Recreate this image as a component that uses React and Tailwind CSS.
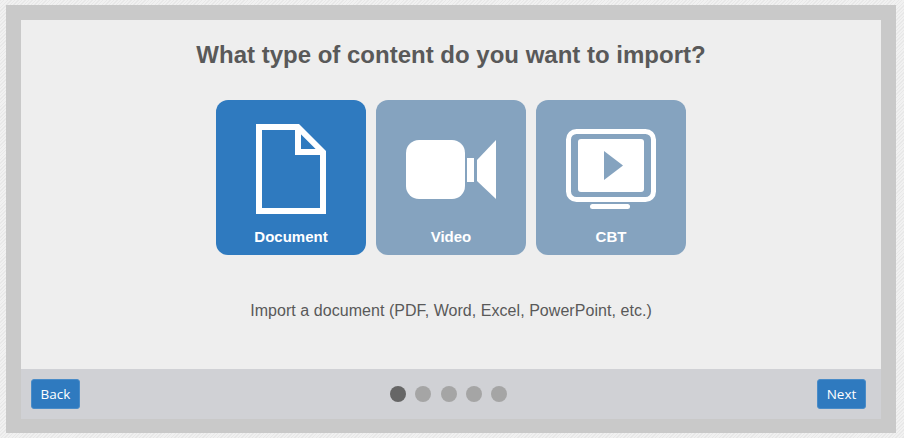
const DOTS = [true, false, false, false, false];

function DocumentIcon() {
  return (
    <svg width="70" height="90" viewBox="0 0 70 90" fill="none" stroke="#fff" strokeWidth="6">
      <path d="M3 3H41.760L67 28.240V87H3Z" />
      <path d="M42 3V28H67" />
    </svg>
  );
}

function VideoIcon() {
  return (
    <svg width="90" height="59" viewBox="0 0 90 59" fill="#fff">
      <rect x="0" y="0" width="59" height="59" rx="13" />
      <rect x="61" y="18" width="7" height="24" />
      <path d="M71 20L90 0V59L71 41Z" />
    </svg>
  );
}

function CbtIcon() {
  return (
    <svg width="90" height="81" viewBox="0 0 90 81" fill="none">
      <rect x="2.500" y="2.500" width="85" height="68" rx="8" stroke="#fff" strokeWidth="5" />
      <rect x="12" y="10" width="66" height="53" rx="3" fill="#fff" />
      <path d="M38 22L57 36.500L38 51Z" fill="#85A3BF" />
      <rect x="24" y="75" width="40" height="5" rx="2.500" fill="#fff" />
    </svg>
  );
}

const TYPES = [
  { label: 'Document', Icon: DocumentIcon, iconClass: 'h-[114px] pt-6', active: true },
  { label: 'Video', Icon: VideoIcon, iconClass: 'h-[114px] pt-10' },
  { label: 'CBT', Icon: CbtIcon, iconClass: 'h-[114px] pt-[29px]' },
];

function TypeCard({ label, Icon, iconClass, active }) {
  return (
    <div
      className={`w-[150px] h-[155px] rounded-xl flex flex-col items-center text-white ${active ? 'bg-[#2F7ABF]' : 'bg-[#85A3BF]'}`}
    >
      <div className={iconClass}>
        <Icon />
      </div>
      <p className="mt-[14px] text-[15px] leading-[18px] font-bold">{label}</p>
    </div>
  );
}

function NavButton({ children }) {
  return (
    <button className="w-[49px] h-[30px] rounded-[3px] bg-[#2F7ABF] border border-[#4A8CC8] text-white text-[13.500px] font-['Open_Sans',sans-serif]">
      {children}
    </button>
  );
}

export default function App() {
  return (
    <div className="w-[904px] h-[438px] pt-[5px] pl-[6px] pr-2 pb-[5px] bg-[repeating-linear-gradient(135deg,#E8E8E8_0px,#E8E8E8_1px,#F1F1F1_1px,#F1F1F1_2.500px)] font-['Liberation_Sans',sans-serif]">
      <div className="h-[428px] p-[15px] pb-[14px] bg-[#C9C9C9]">
        <div className="h-[399px] flex flex-col bg-[#EEEEEE]">
          <div className="flex-1 flex flex-col items-center">
            <h1 className="mt-[21px] text-[24px] leading-[28px] font-bold text-[#595959]">
              What type of content do you want to import?
            </h1>
            <div className="mt-[31px] flex gap-[10px]">
              {TYPES.map((t) => (
                <TypeCard key={t.label} {...t} />
              ))}
            </div>
            <p className="mt-[46px] text-[16px] leading-[20px] tracking-[0.05px] text-[#595959]">
              Import a document (PDF, Word, Excel, PowerPoint, etc.)
            </p>
          </div>
          <div className="h-[50px] pl-[10px] pr-[15px] flex items-center justify-between bg-[#D0D1D5]">
            <NavButton>Back</NavButton>
            <div className="flex gap-[9.250px]">
              {DOTS.map((on, i) => (
                <span key={i} className={`w-4 h-4 rounded-full ${on ? 'bg-[#666666]' : 'bg-[#A5A5A5]'}`} />
              ))}
            </div>
            <NavButton>Next</NavButton>
          </div>
        </div>
      </div>
    </div>
  );
}
